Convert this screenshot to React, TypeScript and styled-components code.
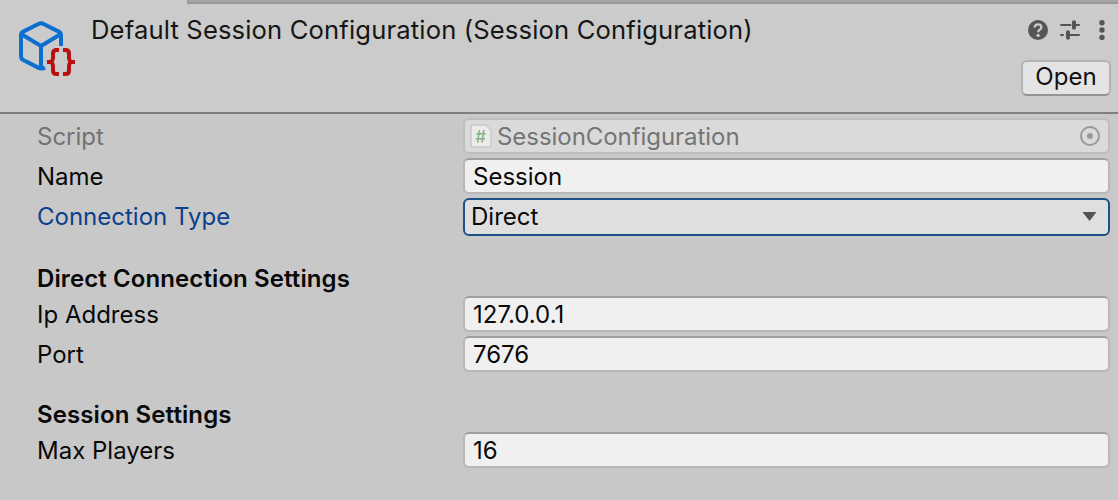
import React from "react";
import styled, { createGlobalStyle } from "styled-components";

const GlobalStyle = createGlobalStyle`
  *, *::before, *::after { box-sizing: border-box; }
  body { margin: 0; background: #c8c8c8; }
`;

const Inspector = styled.main`
  display: flex;
  flex-direction: column;
  height: 500px;
  overflow: hidden;
  background: #c8c8c8;
  color: #090909;
  font-family: Inter, "Liberation Sans", sans-serif;
  font-size: 24px;
  line-height: 36px;
`;

const TabStrip = styled.div`
  height: 4px;
  flex: none;
  background: #cbcbcb;
  padding-left: 187px;
`;

const TabStripShade = styled.div`
  height: 4px;
  background: #a5a5a5;
  border-bottom: 2px solid #999;
  border-left: 2px solid #999;
`;

const Header = styled.header`
  display: flex;
  flex: none;
  height: 110px;
  padding: 0 8px 0 18px;
  background: #cbcbcb;
  border-bottom: 2px solid #7f7f7f;
`;

const AssetIcon = styled.svg`
  flex: none;
  width: 60px;
  height: 60px;
  margin-top: 14px;
`;

const Title = styled.h1`
  flex: 1;
  margin: 8px 0 0 13px;
  color: #161616;
  font-size: 25.6px;
  font-weight: 400;
  line-height: 36px;
  letter-spacing: 0.15px;
  white-space: nowrap;
`;

const Actions = styled.div`
  display: flex;
  flex-direction: column;
  align-items: flex-end;
`;

const Toolbar = styled.div`
  display: flex;
  gap: 12px;
  margin-top: 16px;
  margin-right: -2px;
`;

const ToolIcon = styled.svg`
  width: 20px;
  height: 20px;
  color: #555;
`;

const OpenButton = styled.button`
  width: 90px;
  height: 36px;
  margin: 20px -1px 0 0;
  padding: 0 0 2px;
  border: 2px solid #b2b2b2;
  border-bottom-color: #949494;
  border-radius: 6px;
  background: #e4e4e4;
  color: #111;
  font: inherit;
  line-height: 30px;
  letter-spacing: 0.1px;
`;

const Form = styled.div`
  display: flex;
  flex-direction: column;
  gap: 4px;
  padding: 4px 8px 0 37px;
`;

const Row = styled.div`
  display: grid;
  grid-template-columns: 426px 1fr;
  align-items: start;
`;

const Label = styled.label<{ $tone?: string }>`
  height: 36px;
  color: ${(p) => p.$tone ?? "#090909"};
  line-height: 37px;
`;

const Section = styled.h2`
  margin: 20px 0 -4px;
  height: 36px;
  font-size: 24px;
  font-weight: 600;
  line-height: 37px;
  letter-spacing: 0.1px;
`;

const Field = styled.div`
  display: flex;
  height: 36px;
  padding: 0 8px;
  border: 2px solid #b7b7b7;
  border-top-color: #a0a0a0;
  border-radius: 6px;
  background: #f0f0f0;
  line-height: 33px;
`;

const ObjectField = styled(Field)`
  align-items: center;
  padding: 0 8px 0 5px;
  border-color: #bebebe;
  background: #dadada;
  color: #757575;
`;

const ObjectName = styled.span`
  flex: 1;
  margin-left: 5px;
  letter-spacing: -0.05px;
`;

const Dropdown = styled(Field)`
  justify-content: space-between;
  height: 38px;
  padding: 0 11px 0 6px;
  border-color: #1d5087;
  background: #dfdfdf;
`;

const Caret = styled.svg`
  width: 15px;
  height: 9px;
  margin-top: 12px;
`;

export default function App() {
  return (
    <Inspector>
      <GlobalStyle />
      <TabStrip><TabStripShade /></TabStrip>
      <Header>
        <AssetIcon viewBox="18 18 60 60" fill="none" strokeLinejoin="round">
          <g stroke="#0d6ed1" strokeWidth="4">
            <path d="M61 46V35.5Q61 32.8 58.8 31.6L43.6 24Q41 22.6 38.4 24L23.2 31.6Q21 32.8 21 35.5V56Q21 58.8 23.2 60L38.2 67.6Q41.5 69.2 45 67.6" />
            <path d="M22 34.5L41 46L60 34.5M41 46V68.5" />
          </g>
          <g stroke="#b91010" strokeWidth="4">
            <path d="M59 50H56.5Q53 50 53 53.5V58Q53 60.5 51 62Q53 63.5 53 66V70.5Q53 74 56.5 74H59M47 62H52" />
            <path d="M63 50H65.5Q69 50 69 53.5V58Q69 60.5 71 62Q69 63.5 69 66V70.5Q69 74 65.5 74H63M75 62H70" />
          </g>
        </AssetIcon>
        <Title>Default Session Configuration (Session Configuration)</Title>
        <Actions>
          <Toolbar>
            <ToolIcon viewBox="0 0 20 20" fill="none">
              <circle cx="10" cy="10" r="10" fill="currentColor" />
              <path d="M6.7 7.4C6.7 3.4 13.4 3.2 13.4 7.2C13.4 9.7 10.1 9.6 10.1 12.3" stroke="#cbcbcb" strokeWidth="2.3" />
              <circle cx="10.1" cy="15.4" r="1.6" fill="#cbcbcb" />
            </ToolIcon>
            <ToolIcon viewBox="0 0 20 20" fill="none" stroke="currentColor" strokeLinecap="round">
              <path d="M1 5H10.5M14 5H19M1 15H3M8 15H19" strokeWidth="2" />
              <path d="M14 2.2V7.8M8 12.2V17.8" strokeWidth="4" />
            </ToolIcon>
            <ToolIcon viewBox="0 0 20 20" fill="currentColor">
              <circle cx="10" cy="2.7" r="2.7" />
              <circle cx="10" cy="10" r="2.7" />
              <circle cx="10" cy="17.4" r="2.7" />
            </ToolIcon>
          </Toolbar>
          <OpenButton>Open</OpenButton>
        </Actions>
      </Header>
      <Form>
        <Row>
          <Label $tone="#737373">Script</Label>
          <ObjectField>
            <svg width="22" height="24" viewBox="0 0 22 24" fill="none">
              <path d="M3 1H16L21 6V21Q21 23 19 23H3Q1 23 1 21V3Q1 1 3 1Z" fill="#ebebeb" stroke="#cacaca" strokeWidth="1.6" />
              <path d="M9.4 6L7.6 18.5M13.8 6L12 18.5M6.3 9.8H15.7M5.7 14.7H15" stroke="#83b083" strokeWidth="1.5" />
            </svg>
            <ObjectName>SessionConfiguration</ObjectName>
            <svg width="20" height="20" viewBox="0 0 20 20" fill="none">
              <circle cx="10" cy="10" r="9" stroke="#999" strokeWidth="2" />
              <circle cx="10" cy="10" r="3" fill="#999" />
            </svg>
          </ObjectField>
        </Row>
        <Row>
          <Label>Name</Label>
          <Field>Session</Field>
        </Row>
        <Row>
          <Label $tone="#0a408c">Connection Type</Label>
          <Dropdown>
            Direct
            <Caret viewBox="0 0 15 9"><path d="M0.5 0H14.5L7.5 9Z" fill="#555550" /></Caret>
          </Dropdown>
        </Row>
        <Section>Direct Connection Settings</Section>
        <Row>
          <Label>Ip Address</Label>
          <Field>127.0.0.1</Field>
        </Row>
        <Row>
          <Label>Port</Label>
          <Field>7676</Field>
        </Row>
        <Section>Session Settings</Section>
        <Row>
          <Label>Max Players</Label>
          <Field>16</Field>
        </Row>
      </Form>
    </Inspector>
  );
}
